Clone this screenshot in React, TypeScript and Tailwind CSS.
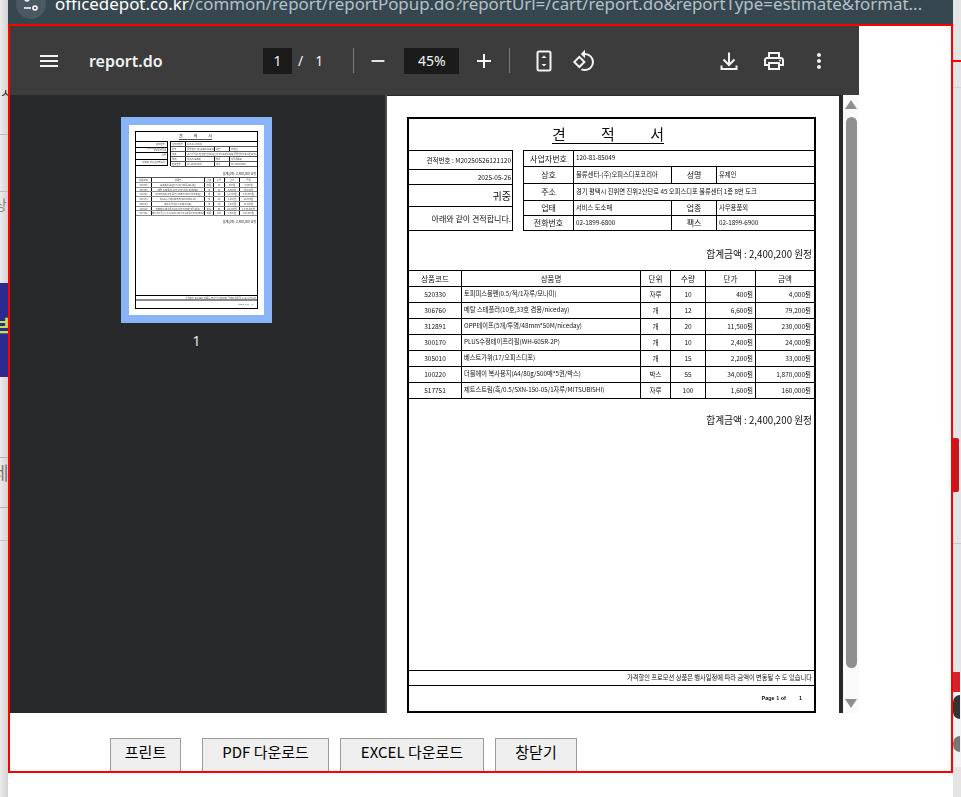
import { MdAdd, MdMenu, MdMoreVert, MdOutlinePrint, MdOutlineRotate90DegreesCcw, MdRemove } from 'react-icons/md'

const items = [
  { code: '520330', name: '토피피스볼펜(0.5/적/1자루/모나미)', unit: '자루', qty: '10', price: '400원', amount: '4,000원' },
  { code: '306760', name: '메탈 스테플러(10호,33호 겸용/niceday)', unit: '개', qty: '12', price: '6,600원', amount: '79,200원' },
  { code: '312891', name: 'OPP테이프(5개/투명/48mm*50M/niceday)', unit: '개', qty: '20', price: '11,500원', amount: '230,000원' },
  { code: '300170', name: 'PLUS수정테이프리필(WH-605R-2P)', unit: '개', qty: '10', price: '2,400원', amount: '24,000원' },
  { code: '305010', name: '베스트가위(17/오피스디포)', unit: '개', qty: '15', price: '2,200원', amount: '33,000원' },
  { code: '100220', name: '더블에이 복사용지(A4/80g/500매*5권/박스)', unit: '박스', qty: '55', price: '34,000원', amount: '1,870,000원' },
  { code: '517751', name: '제트스트림(흑/0.5/SXN-150-05/1자루/MITSUBISHI)', unit: '자루', qty: '100', price: '1,600원', amount: '160,000원' },
]

const rowGrid = 'grid grid-cols-[53px_179px_30px_35px_50px_1fr] border-t border-black'

function InfoLabel({ children }: { children: string }) {
  return <div className="flex items-center justify-center border-r border-black text-[8px]">{children}</div>
}

function InfoValue({ children, last }: { children: string; last?: boolean }) {
  return <div className={`flex items-center pl-[2px] text-[6.3px] ${last ? '' : 'border-r border-black'}`}>{children}</div>
}

function QuoteDoc() {
  return (
    <div className="flex h-[596px] w-[409px] flex-col border-x-2 border-t-2 border-b-2 border-black bg-white font-['Noto_Sans_CJK_KR','Liberation_Sans',sans-serif] leading-none text-[#111]">
      <div className="flex h-[31px] shrink-0 items-center justify-center pr-[7px]">
        <div className="flex w-[112px] justify-between border-b border-black pb-[1px] text-[15px] leading-[17px]">
          <span>견</span>
          <span>적</span>
          <span>서</span>
        </div>
      </div>

      <div className="flex h-[81px] shrink-0">
        <div className="flex w-[104px] flex-col border-b border-black text-right">
          <div className="flex h-[20px] items-center justify-end border-y border-r border-black pr-[1px] text-[6.5px]">견적번호 : M20250526121120</div>
          <div className="flex h-[15px] items-center justify-end border-b border-r border-black pr-[1px] text-[6.5px]">2025-05-26</div>
          <div className="flex h-[22px] items-center justify-end border-b border-r border-black pr-[1px] text-[10px]">귀중</div>
          <div className="flex flex-1 items-center justify-end border-r border-black pr-[1px] text-[8px]">아래와 같이 견적합니다.</div>
        </div>
        <div className="ml-[10px] flex flex-1 flex-col border-l border-b border-black">
          <div className="grid h-[16px] grid-cols-[50px_1fr] border-t border-black">
            <InfoLabel>사업자번호</InfoLabel>
            <InfoValue last>120-81-85049</InfoValue>
          </div>
          <div className="grid h-[17px] grid-cols-[50px_98px_45px_1fr] border-t border-black">
            <InfoLabel>상호</InfoLabel>
            <InfoValue>물류센터-(주)오피스디포코리아</InfoValue>
            <InfoLabel>성명</InfoLabel>
            <InfoValue last>유제인</InfoValue>
          </div>
          <div className="grid h-[17px] grid-cols-[50px_1fr] border-t border-black">
            <InfoLabel>주소</InfoLabel>
            <InfoValue last>경기 평택시 진위면 진위2산단로 45 오피스디포 물류센터 1층 8번 도크</InfoValue>
          </div>
          <div className="grid h-[15px] grid-cols-[50px_98px_45px_1fr] border-t border-black">
            <InfoLabel>업태</InfoLabel>
            <InfoValue>서비스 도소매</InfoValue>
            <InfoLabel>업종</InfoLabel>
            <InfoValue last>사무용품외</InfoValue>
          </div>
          <div className="grid flex-1 grid-cols-[50px_98px_45px_1fr] border-t border-black">
            <InfoLabel>전화번호</InfoLabel>
            <InfoValue>02-1899-6800</InfoValue>
            <InfoLabel>팩스</InfoLabel>
            <InfoValue last>02-1899-6900</InfoValue>
          </div>
        </div>
      </div>

      <div className="flex h-[39px] shrink-0 items-center justify-end pt-[8px] pr-[2px] text-[9.7px]">합계금액 : 2,400,200 원정</div>

      <div className="shrink-0 border-b border-black">
        <div className={`${rowGrid} h-[16px] text-[7.5px]`}>
          {['상품코드', '상품명', '단위', '수량', '단가'].map((label) => (
            <div key={label} className="flex items-center justify-center border-r border-black">{label}</div>
          ))}
          <div className="flex items-center justify-center">금액</div>
        </div>
        {items.map((item) => (
          <div key={item.code} className={`${rowGrid} h-[16px] text-[6.5px]`}>
            <div className="flex items-center justify-center border-r border-black">{item.code}</div>
            <div className="flex items-center overflow-hidden border-r border-black pl-[2px] text-[6.25px] whitespace-nowrap">{item.name}</div>
            <div className="flex items-center justify-center border-r border-black">{item.unit}</div>
            <div className="flex items-center justify-center border-r border-black">{item.qty}</div>
            <div className="flex items-center justify-end border-r border-black pr-[2px]">{item.price}</div>
            <div className="flex items-center justify-end pr-[3px]">{item.amount}</div>
          </div>
        ))}
      </div>

      <div className="flex h-[44px] shrink-0 items-center justify-end pr-[2px] text-[9.7px]">합계금액 : 2,400,200 원정</div>

      <div className="mt-auto flex h-[16px] shrink-0 items-center justify-end border-y border-black pr-[2px] text-[6.25px]">
        가격할인 프로모션 상품은 행사일정에 따라 금액이 변동될 수 도 있습니다
      </div>
      <div className="flex h-[25px] shrink-0 items-center justify-end pr-[12px] font-['Liberation_Sans',sans-serif] text-[5.5px] font-bold">
        <span>Page 1 of</span>
        <span className="ml-[13px]">1</span>
      </div>
    </div>
  )
}

// thumbnail is drawn with its own 1px lines, a scaled copy of the page loses them
const thumbGrid = 'grid h-[4.75px] grid-cols-[16px_53px_9px_11px_15px_1fr] border-b border-[#8a8a8a]'

function ThumbCell({ children, last }: { children: string; last?: boolean }) {
  return <div className={`overflow-hidden text-center whitespace-nowrap ${last ? '' : 'border-r border-black'}`}>{children}</div>
}

function ThumbRow({ cells }: { cells: string[] }) {
  return (
    <div className="flex h-[5px] border-b border-[#555]">
      {cells.map((text, i) => (
        <div key={text} className={`overflow-hidden pl-[1px] whitespace-nowrap ${i % 2 === 0 ? 'w-[15px] border-r border-black' : i === 1 && cells.length > 2 ? 'w-[29px] border-r border-black' : 'min-w-0 flex-1'}`}>{text}</div>
      ))}
    </div>
  )
}

function ThumbDoc() {
  return (
    <div className="flex h-[178px] w-[123px] flex-col overflow-hidden border border-black font-['Noto_Sans_CJK_KR',sans-serif] text-[2.4px] leading-[4px] text-[#444] blur-[0.3px]">
      <div className="flex h-[9px] shrink-0 items-center justify-center pr-[2px]">
        <div className="flex w-[33px] justify-between border-b border-[#555] text-[4px] leading-[5px] text-[#222]">
          <span>견</span>
          <span>적</span>
          <span>서</span>
        </div>
      </div>
      <div className="flex h-[25px] shrink-0">
        <div className="w-[32px] border-t border-r border-black text-right">
          <div className="h-[6px] border-b border-black pr-[1px]">견적번호 : M20250526121120</div>
          <div className="h-[5px] border-b border-black pr-[1px]">2025-05-26</div>
          <div className="h-[7px] border-b border-black pr-[1px]">귀중</div>
          <div className="h-[6px] border-b border-black pr-[1px]">아래와 같이 견적합니다.</div>
        </div>
        <div className="ml-[2px] min-w-0 flex-1 border-l border-t border-black">
          <ThumbRow cells={['사업자번호', '120-81-85049']} />
          <ThumbRow cells={['상호', '물류센터-(주)오피스디포코리아', '성명', '유제인']} />
          <ThumbRow cells={['주소', '경기 평택시 진위면 진위2산단로 45 오피스디포 물류센터 1층 8번 도크']} />
          <ThumbRow cells={['업태', '서비스 도소매', '업종', '사무용품외']} />
          <ThumbRow cells={['전화번호', '02-1899-6800', '팩스', '02-1899-6900']} />
        </div>
      </div>
      <div className="flex h-[11px] shrink-0 items-center justify-end pt-[4px] pr-[1px] text-[3px] font-medium">합계금액 : 2,400,200 원정</div>
      <div className="shrink-0 border-t border-[#555]">
        <div className={thumbGrid}>
          {['상품코드', '상품명', '단위', '수량', '단가'].map((label) => (
            <ThumbCell key={label}>{label}</ThumbCell>
          ))}
          <ThumbCell last>금액</ThumbCell>
        </div>
        {items.map((item) => (
          <div key={item.code} className={thumbGrid}>
            <ThumbCell>{item.code}</ThumbCell>
            <ThumbCell>{item.name}</ThumbCell>
            <ThumbCell>{item.unit}</ThumbCell>
            <ThumbCell>{item.qty}</ThumbCell>
            <ThumbCell>{item.price}</ThumbCell>
            <ThumbCell last>{item.amount}</ThumbCell>
          </div>
        ))}
      </div>
      <div className="flex h-[11px] shrink-0 items-center justify-end pr-[1px] text-[3px] font-medium">합계금액 : 2,400,200 원정</div>
      <div className="mt-auto flex h-[6px] shrink-0 items-center justify-end border-t border-b-2 border-t-black border-b-[#8a8a8a] pr-[1px]">
        가격할인 프로모션 상품은 행사일정에 따라 금액이 변동될 수 도 있습니다
      </div>
      <div className="flex h-[7px] shrink-0 items-center justify-end pr-[4px] font-['Liberation_Sans',sans-serif]">
        <span>Page 1 of</span>
        <span className="ml-[3px]">1</span>
      </div>
    </div>
  )
}

function FitIcon() {
  return (
    <svg width="24" height="24" viewBox="0 0 24 24" fill="none">
      <rect x="5.5" y="2.5" width="13" height="19" rx="1.5" stroke="currentColor" strokeWidth="2" />
      <path d="M12 6.5l2.5 2.5h-5zM12 17.5L9.5 15h5z" fill="currentColor" />
    </svg>
  )
}

function DownloadIcon() {
  return (
    <svg width="24" height="24" viewBox="0 0 24 24" fill="none" stroke="currentColor" strokeWidth="2">
      <path d="M12 3.5v12M6.5 10.5l5.5 5.5 5.5-5.5M4.5 16.5v3.5h15v-3.5" />
    </svg>
  )
}

function Toolbar() {
  return (
    <div className="flex h-[69px] shrink-0 items-center bg-[#3c3c3c] font-['Noto_Sans',sans-serif] text-[#f1f3f4]">
      <div className="ml-[27px] flex w-[24px] justify-center"><MdMenu size={24} /></div>
      <div className="ml-[28px] w-[174px] text-[16px] font-semibold">report.do</div>
      <div className="flex h-[26px] w-[29px] items-center justify-center bg-[#1b1b1b] text-[14px]">1</div>
      <span className="ml-[6px] text-[14px]">/</span>
      <span className="ml-[12px] text-[14px]">1</span>
      <div className="ml-[30px] h-[25px] w-px bg-[#7c7c7c]" />
      <div className="ml-[12px] flex w-[24px] justify-center"><MdRemove size={22} /></div>
      <div className="ml-[14px] flex h-[26px] w-[55px] items-center justify-center bg-[#1b1b1b] text-[14px]">45%</div>
      <div className="ml-[13px] flex w-[24px] justify-center"><MdAdd size={24} /></div>
      <div className="ml-[13px] h-[25px] w-px bg-[#7c7c7c]" />
      <div className="ml-[22px] flex w-[24px] justify-center"><FitIcon /></div>
      <div className="ml-[16px] flex w-[24px] justify-center"><MdOutlineRotate90DegreesCcw size={24} /></div>
      <div className="ml-[121px] flex w-[24px] justify-center"><DownloadIcon /></div>
      <div className="ml-[21px] flex w-[24px] justify-center"><MdOutlinePrint size={24} /></div>
      <div className="ml-[21px] flex w-[24px] justify-center"><MdMoreVert size={24} /></div>
    </div>
  )
}

function Sidebar() {
  return (
    <div className="flex w-[377px] shrink-0 flex-col items-center border-r-2 border-[#4a4b4c] bg-[#28292a] pt-[22px]">
      <div className="mr-[2px] border-[8px] border-[#8ab4f8] bg-white p-[6px]">
        <ThumbDoc />
      </div>
      <div className="mt-[7px] mr-[2px] font-['Noto_Sans',sans-serif] text-[14px] text-[#e8eaed]">1</div>
    </div>
  )
}

function Viewer() {
  return (
    <div className="flex min-h-0 flex-1">
      <Sidebar />
      <div className="flex-1 overflow-hidden border-t border-[#28292a] bg-white pt-[21px] pl-[20px]">
        <div className="blur-[0.35px]">
          <QuoteDoc />
        </div>
      </div>
      <div className="w-[4px] shrink-0 bg-[#28292a]" />
      <div className="flex w-[16px] shrink-0 flex-col items-center bg-[#fafafa] pt-[5px] pb-[5px]">
        <div className="h-0 w-0 border-x-[6.5px] border-b-[9px] border-x-transparent border-b-[#8f8f8f]" />
        <div className="mt-[8px] h-[551px] w-[11px] rounded-full bg-[#8f8f8f]" />
        <div className="mt-auto h-0 w-0 border-x-[6.5px] border-t-[9px] border-x-transparent border-t-[#8f8f8f]" />
      </div>
    </div>
  )
}

function ActionButton({ label, width, gap }: { label: string; width: string; gap: string }) {
  return (
    <button className={`h-[33px] ${width} ${gap} border border-b-0 border-[#9a9a9a] bg-[#efefef] pb-[5px] font-['Noto_Sans_CJK_KR',sans-serif] text-[15px] text-black`}>
      {label}
    </button>
  )
}

function LeftStrip() {
  return (
    <div className="flex w-[8px] shrink-0 flex-col overflow-hidden bg-gradient-to-r from-[#ebebeb] to-[#d4d4d4] font-['Noto_Sans_CJK_KR',sans-serif] text-[#555]">
      <div className="h-[86px] shrink-0" />
      <div className="h-[14px] shrink-0 text-[12px] leading-[14px] text-[#222]">ㅅ</div>
      <div className="h-[35px] shrink-0 border-b border-[#bdbdbd]" />
      <div className="h-[57px] shrink-0 border-b border-[#bdbdbd]" />
      <div className="h-[3px] shrink-0" />
      <div className="-ml-[6px] h-[18px] shrink-0 text-[14px] leading-[18px] text-[#888]">상</div>
      <div className="h-[70px] shrink-0" />
      <div className="flex h-[94px] shrink-0 flex-col justify-center bg-[#2a2a90] pb-[8px]">
        <div className="-ml-[8px] text-[20px] leading-[22px] font-bold text-[#c6e04a]">브</div>
      </div>
      <div className="h-[81px] shrink-0 border-b border-[#b5b5b5]" />
      <div className="h-[2px] shrink-0" />
      <div className="-ml-[8px] h-[24px] shrink-0 text-[18px] leading-[24px] text-[#777]">네</div>
      <div className="h-[24px] shrink-0 border-b border-[#b5b5b5]" />
      <div className="h-[33px] shrink-0 border-b border-[#c4c4c4]" />
    </div>
  )
}

function RightStrip() {
  return (
    <div className="flex w-[8px] shrink-0 flex-col overflow-hidden bg-[#e4e4e4]">
      <div className="h-[60px] shrink-0" />
      <div className="h-[2px] shrink-0 bg-[#ff0000]" />
      <div className="h-[26px] shrink-0 border-b border-[#d2d2d2]" />
      <div className="h-[350px] shrink-0" />
      <div className="h-[54px] w-[6px] shrink-0 rounded-r-[2px] bg-[#c8161d]" />
      <div className="h-[52px] shrink-0 border-b border-[#c9c9c9]" />
      <div className="h-[128px] shrink-0" />
      <div className="flex h-[95px] shrink-0 flex-col items-start bg-[#f2f2f2]">
        <div className="h-[20px] w-[7px] bg-[#d6232a]" />
        <div className="mt-[3px] h-[24px] w-[7px] rounded-l-full bg-[#333]" />
        <div className="mt-[17px] h-[16px] w-[7px] rounded-l-full bg-[#777]" />
      </div>
    </div>
  )
}

export default function App() {
  return (
    <div className="flex h-[797px] w-[961px] overflow-hidden bg-white">
      <LeftStrip />
      <div className="flex w-[945px] shrink-0 flex-col">
        <div className="flex h-[24px] shrink-0 items-start overflow-hidden bg-[#37474f] font-['Noto_Sans',sans-serif]">
          <div className="-mt-[11px] ml-[8px] flex h-[30px] w-[30px] shrink-0 items-center justify-center rounded-full bg-[#4a5a63] text-white">
            <svg width="18" height="18" viewBox="0 0 18 18" fill="none" stroke="currentColor" strokeWidth="1.6">
              <circle cx="5" cy="4" r="2" />
              <path d="M9 4h7M2 13h7" />
              <circle cx="13" cy="13" r="2" />
            </svg>
          </div>
          <div className="-mt-[8px] ml-[9px] text-[16.9px] leading-[24px] whitespace-nowrap text-[#b4c0c6]">
            <span className="text-white">officedepot.co.kr</span>/common/report/reportPopup.do?reportUrl=/cart/report.do&amp;reportType=estimate&amp;format...
          </div>
        </div>
        <div className="flex h-[749px] shrink-0 flex-col border-2 border-[#ff0000] bg-white">
          <div className="flex h-[687px] w-[849px] shrink-0 flex-col">
            <Toolbar />
            <Viewer />
          </div>
          <div className="mt-[25px] flex pl-[100px]">
            <ActionButton label="프린트" width="w-[71px]" gap="" />
            <ActionButton label="PDF 다운로드" width="w-[127px]" gap="ml-[21px]" />
            <ActionButton label="EXCEL 다운로드" width="w-[144px]" gap="ml-[11px]" />
            <ActionButton label="창닫기" width="w-[82px]" gap="ml-[11px]" />
          </div>
        </div>
        <div className="flex-1 bg-white" />
      </div>
      <RightStrip />
    </div>
  )
}
